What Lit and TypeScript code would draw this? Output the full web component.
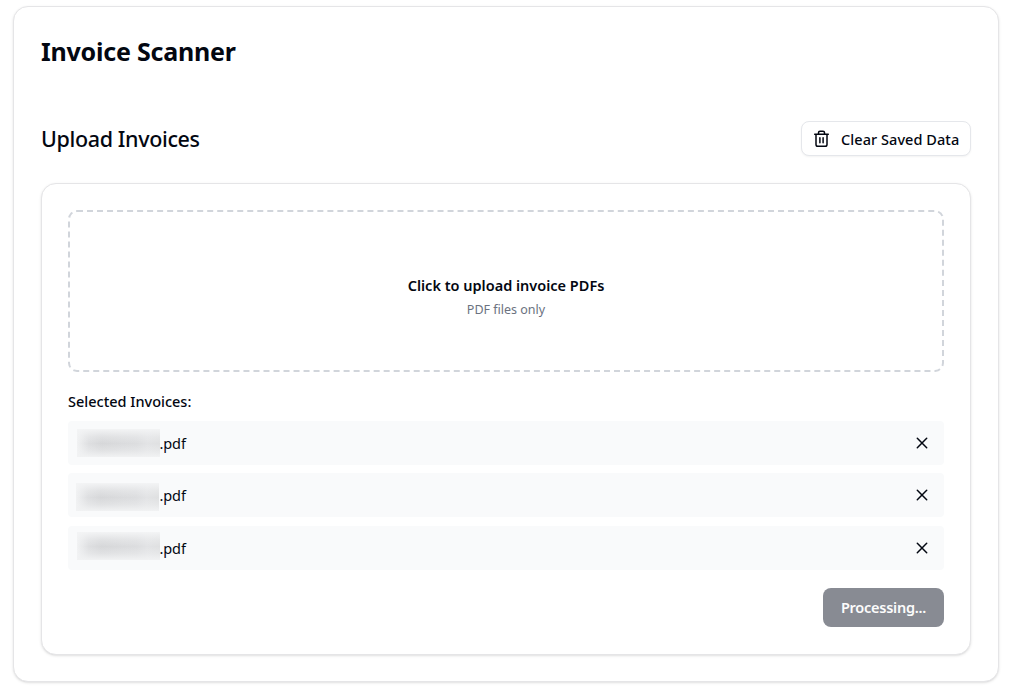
import { LitElement, html, css } from "lit";
import { customElement, state } from "lit/decorators.js";
import { classMap } from "lit/directives/class-map.js";

interface InvoiceFile {
  id: number;
  mask: string;
}

@customElement("app-root")
export class AppRoot extends LitElement {
  static styles = css`
    :host {
      display: block;
      box-sizing: border-box;
      height: 686px;
      padding: 6px 18px 4px 13px;
      overflow: hidden;
      background: #fff;
      color: #030711;
      font-family: "Noto Sans", "Open Sans", sans-serif;
    }
    * {
      box-sizing: border-box;
      margin: 0;
    }
    .card {
      border: 1px solid #e5e5e7;
      border-radius: 15px;
      background: #fff;
      box-shadow: 0 1px 3px rgba(0, 0, 0, 0.1), 0 1px 2px -1px rgba(0, 0, 0, 0.1);
    }
    .page {
      height: 676px;
      padding: 26px 27px 0;
    }
    h1 {
      height: 40px;
      font-size: 25px;
      line-height: 37px;
      font-weight: 700;
      letter-spacing: -0.22px;
      white-space: nowrap;
    }
    .bar {
      display: flex;
      justify-content: space-between;
      align-items: center;
      height: 35px;
      margin-top: 48px;
    }
    h2 {
      font-size: 21.5px;
      line-height: 35px;
      font-weight: 500;
      letter-spacing: -0.36px;
      white-space: nowrap;
    }
    button {
      font-family: inherit;
      color: inherit;
      white-space: nowrap;
    }
    .clear {
      display: flex;
      align-items: center;
      width: 170px;
      height: 35px;
      padding: 0 0 0 11px;
      border: 1px solid #e5e7eb;
      border-radius: 8px;
      background: #fff;
      box-shadow: 0 1px 2px rgba(0, 0, 0, 0.05);
      font-size: 14.5px;
      font-weight: 500;
      letter-spacing: 0.06px;
      gap: 11px;
    }
    .panel {
      height: 472px;
      margin-top: 27px;
      padding: 26px 26px 0;
    }
    .drop {
      display: flex;
      flex-direction: column;
      align-items: center;
      height: 162px;
      padding-top: 60px;
      border: 2px dashed #d1d5db;
      border-radius: 9px;
    }
    .drop-title {
      font-size: 14.5px;
      line-height: 26px;
      font-weight: 600;
    }
    .drop-note {
      margin-top: 1px;
      font-size: 12.5px;
      line-height: 21px;
      color: #6b7280;
    }
    h3 {
      margin-top: 18px;
      font-size: 14.5px;
      line-height: 22px;
      font-weight: 500;
    }
    .files {
      display: grid;
      gap: 8.45px;
      margin-top: 9px;
    }
    .file {
      display: flex;
      align-items: center;
      height: 44px;
      padding-left: 9px;
      padding-right: 14px;
      border-radius: 4px;
      background: #f9fafb;
      font-size: 14.5px;
    }
    .ext {
      margin-left: -0.5px;
      letter-spacing: -0.1px;
    }
    .mask {
      width: 83px;
      height: 28px;
      background: linear-gradient(
          to bottom,
          #f3f4f5,
          rgba(243, 244, 245, 0.35) 28%,
          rgba(243, 244, 245, 0) 52%,
          rgba(243, 244, 245, 0.35) 76%,
          #f1f2f3
        ),
        linear-gradient(to right, #f1f2f3, #dedfe1 14%, #d6d7d9 30%, #dadbdd 55%, #dcdddf 72%, #e2e3e5 85%, #dfe0e1);
    }
    .mask.low {
      margin-left: -1px;
      margin-right: 1px;
      margin-top: 3px;
    }
    .mask.high {
      margin-top: -4px;
    }
    .remove {
      display: flex;
      margin-left: auto;
      padding: 0;
      border: 0;
      background: none;
    }
    .actions {
      display: flex;
      justify-content: flex-end;
      margin-top: 18px;
    }
    .process {
      width: 121px;
      height: 39px;
      padding: 0;
      border: 0;
      border-radius: 8px;
      background: #888b93;
      color: #fcfcfc;
      font-size: 14.5px;
      font-weight: 600;
      letter-spacing: -0.25px;
    }
  `;

  @state() private files: InvoiceFile[] = [
    { id: 1, mask: "mid" },
    { id: 2, mask: "low" },
    { id: 3, mask: "high" },
  ];

  private remove(id: number) {
    this.files = this.files.filter((f) => f.id !== id);
  }

  private row(f: InvoiceFile) {
    return html`<div class="file">
      <span class=${classMap({ mask: true, [f.mask]: true })}></span>
      <span class="ext">.pdf</span>
      <button class="remove" aria-label="Remove" @click=${() => this.remove(f.id)}>
        <svg width="16" height="16" viewBox="0 0 16 16" fill="none" stroke="#030711" stroke-width="1.5" stroke-linecap="round">
          <path d="M3.3 3.3 12.7 12.7M12.7 3.3 3.3 12.7" />
        </svg>
      </button>
    </div>`;
  }

  render() {
    return html`<main class="card page">
      <h1>Invoice Scanner</h1>
      <div class="bar">
        <h2>Upload Invoices</h2>
        <button class="clear">
          <svg width="17" height="18" viewBox="0 0 17 18" fill="none" stroke="#030711" stroke-width="1.5" stroke-linecap="round" stroke-linejoin="round">
            <path d="M1.7 4.3H15.3M3 4.3V14.5Q3 16.3 4.8 16.3H12.2Q14 16.3 14 14.5V4.3M5.5 4V2.8Q5.5 1.3 7 1.3H10Q11.5 1.3 11.5 2.8V4M6.9 7.8V12.7M10.1 7.8V12.7" />
          </svg>
          <span>Clear Saved Data</span>
        </button>
      </div>
      <section class="card panel">
        <div class="drop">
          <p class="drop-title">Click to upload invoice PDFs</p>
          <p class="drop-note">PDF files only</p>
        </div>
        <h3>Selected Invoices:</h3>
        <div class="files">${this.files.map((f) => this.row(f))}</div>
        <div class="actions"><button class="process">Processing...</button></div>
      </section>
    </main>`;
  }
}
